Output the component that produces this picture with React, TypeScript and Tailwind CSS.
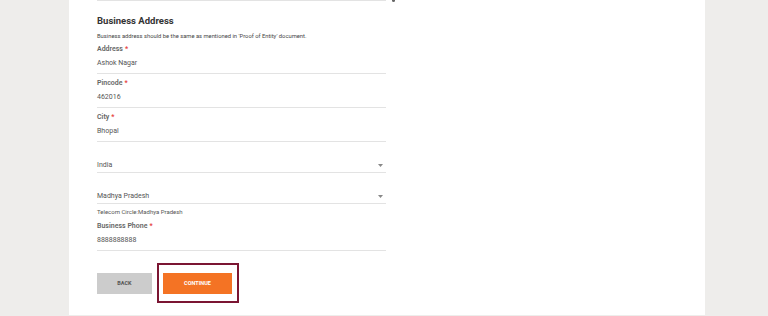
import React from "react";

const font = { fontFamily: "Roboto, 'Open Sans', Arial, sans-serif" };

function Label({ text }: { text: string }) {
  return (
    <div className="h-[10px] leading-[10px] text-[7px] font-semibold text-[#666]">
      {text}
      <span className="text-[#e53935] ml-[2px]">*</span>
    </div>
  );
}

function Field({ label, value, mt }: { label: string; value: string; mt: string }) {
  return (
    <div className={`${mt} w-[289px] border-b border-[#e3e3e3] pb-[5px]`}>
      <Label text={label} />
      <div className="mt-[4px] h-[10px] leading-[10px] text-[7px] text-[#555]">{value}</div>
    </div>
  );
}

function SelectField({ value, mt }: { value: string; mt: string }) {
  return (
    <div className={`${mt} w-[289px] border-b border-[#e3e3e3] pb-[2px] flex items-center justify-between`}>
      <div className="h-[10px] leading-[10px] text-[7px] text-[#555]">{value}</div>
      <svg width="5" height="3" viewBox="0 0 5 3" className="mr-[3px]">
        <path d="M0 0 L5 0 L2.5 3 Z" fill="#888" />
      </svg>
    </div>
  );
}

export default function App() {
  return (
    <div className="w-[768px] h-[316px] bg-[#eeedeb] flex overflow-hidden" style={font}>
      <div className="w-[69px] shrink-0" />
      <div className="w-[636px] h-[315px] bg-white shrink-0 pl-[28px] flex flex-col">
        <div className="flex items-start h-[2px]">
          <div className="w-[289px] h-px bg-[#e3e3e3]" />
          <div className="ml-[6px] w-[3px] h-[2px] rounded-b-full bg-[#666]" />
        </div>
        <div className="mt-[12px] h-[14px] leading-[14px] text-[9.5px] font-bold text-[#333]">
          Business Address
        </div>
        <div className="mt-[4px] h-[8px] leading-[8px] text-[5.8px] text-[#444]">
          Business address should be the same as mentioned in 'Proof of Entity' document.
        </div>
        <Field label="Address" value="Ashok Nagar" mt="mt-[4px]" />
        <Field label="Pincode" value="462016" mt="mt-[4px]" />
        <Field label="City" value="Bhopal" mt="mt-[4px]" />
        <SelectField value="India" mt="mt-[18px]" />
        <SelectField value="Madhya Pradesh" mt="mt-[18px]" />
        <div className="mt-[4px] h-[8px] leading-[8px] text-[6px] text-[#555]">
          Telecom Circle:Madhya Pradesh
        </div>
        <Field label="Business Phone" value="8888888888" mt="mt-[5px]" />
        <div className="mt-[12px] flex items-start">
          <div className="mt-[10px] w-[55px] h-[21px] bg-[#cccccc] flex items-center justify-center text-[5.5px] font-bold text-[#555]">
            BACK
          </div>
          <div className="ml-[5px] w-[82px] h-[40px] border-2 border-[#7b1532] pt-[8px] pl-[4px]">
            <div className="w-[69px] h-[21px] bg-[#f47324] flex items-center justify-center text-[5.5px] font-bold text-white">
              CONTINUE
            </div>
          </div>
        </div>
      </div>
    </div>
  );
}
